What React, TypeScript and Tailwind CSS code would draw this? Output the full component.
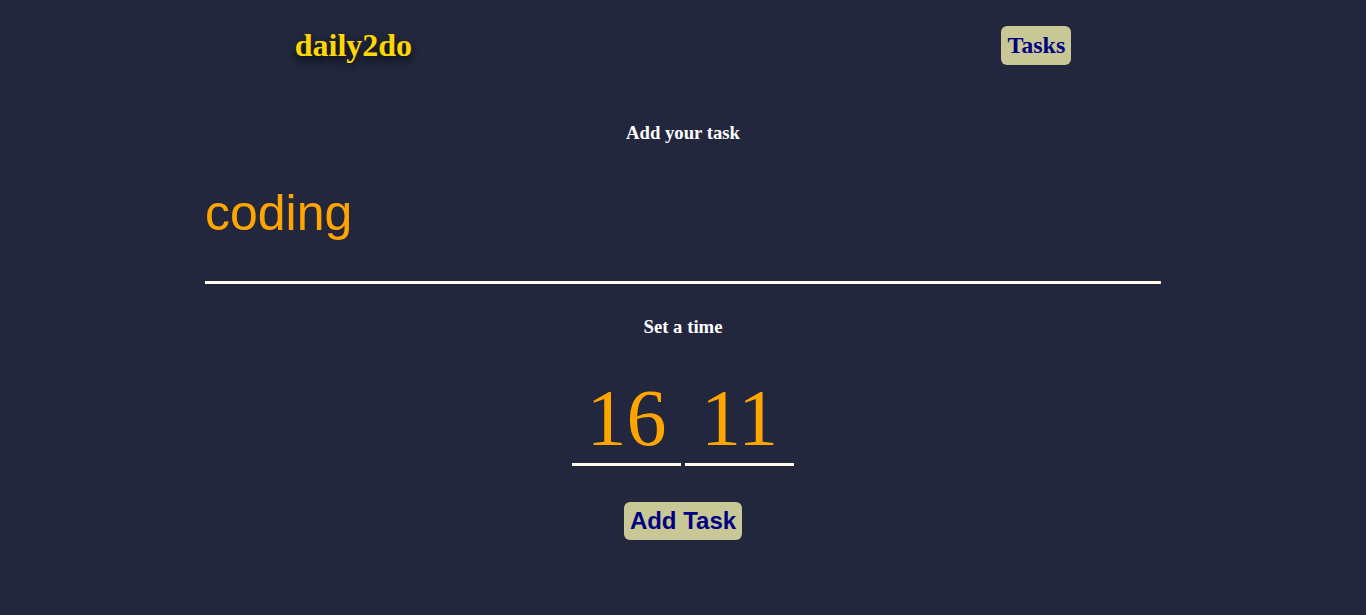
import { useState } from 'react';

export default function App() {
  const [task, setTask] = useState('coding');
  const [hour, setHour] = useState('16');
  const [minute, setMinute] = useState('11');

  return (
    <div className="min-h-[615px] w-full bg-[#22273e]">
      <header className="flex h-[91px] items-center justify-around">
        <h1 className="font-['Liberation_Serif',serif] text-[32px] font-bold leading-[37px] text-[#ffd700] [text-shadow:0_5px_8px_rgba(0,0,0,0.75)]">
          daily2do
        </h1>
        <button className="rounded-[6px] bg-[#c8c896] px-[6px] py-[5px] font-['Liberation_Serif',serif] text-[24px] font-bold leading-[29px] text-[#000080]">
          Tasks
        </button>
      </header>

      <div className="flex flex-col items-center">
        <h3 className="mt-[31px] font-['Liberation_Serif',serif] text-[18.72px] font-bold leading-[22px] text-white">
          Add your task
        </h3>
        <input
          value={task}
          onChange={(e) => setTask(e.target.value)}
          className="h-[140px] w-[956px] border-b-[3px] border-[#fffbe6] bg-transparent p-0 font-['Liberation_Sans',Arial,sans-serif] text-[50px] text-[#ffa500] outline-none"
        />

        <h3 className="mt-[32px] font-['Liberation_Serif',serif] text-[18.72px] font-bold leading-[22px] text-white">
          Set a time
        </h3>
        <div className="mt-[34px] flex gap-[4px]">
          <input
            value={hour}
            onChange={(e) => setHour(e.target.value)}
            className="h-[94px] w-[109px] border-b-[3px] border-[#fffbe6] bg-transparent p-0 text-center font-['Liberation_Serif',serif] text-[80px] text-[#ffa500] outline-none"
          />
          <input
            value={minute}
            onChange={(e) => setMinute(e.target.value)}
            className="h-[94px] w-[109px] border-b-[3px] border-[#fffbe6] bg-transparent p-0 text-center font-['Liberation_Serif',serif] text-[80px] text-[#ffa500] outline-none"
          />
        </div>

        <button className="mt-[36px] rounded-[6px] bg-[#c8c896] px-[6px] py-[5px] font-['Liberation_Sans',Arial,sans-serif] text-[24px] font-bold leading-[28px] text-[#000080]">
          Add Task
        </button>
      </div>
    </div>
  );
}
